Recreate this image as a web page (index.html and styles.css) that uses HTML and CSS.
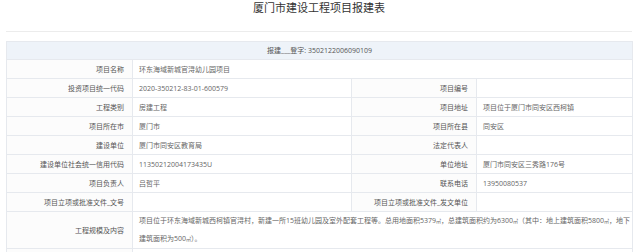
FILE: index.html
```html
<!DOCTYPE html>
<html lang="zh-CN">
<head>
<meta charset="utf-8">
<title>厦门市建设工程项目报建表</title>
<link rel="stylesheet" href="styles.css">
</head>
<body>
<div class="page">
  <h1 class="title">厦门市建设工程项目报建表</h1>
  <div class="divider"></div>
  <table class="sheet">
    <colgroup>
      <col class="c1"><col class="c2"><col class="c3"><col class="c4">
    </colgroup>
    <tr class="head"><td colspan="4">报建___登字: 3502122006090109</td></tr>
    <tr><th>项目名称</th><td colspan="3">环东海域新城官浔幼儿园项目</td></tr>
    <tr><th>投资项目统一代码</th><td>2020-350212-83-01-600579</td><th>项目编号</th><td></td></tr>
    <tr><th>工程类别</th><td>房建工程</td><th>项目地址</th><td>项目位于厦门市同安区西柯镇</td></tr>
    <tr><th>项目所在市</th><td>厦门市</td><th>项目所在县</th><td>同安区</td></tr>
    <tr><th>建设单位</th><td>厦门市同安区教育局</td><th>法定代表人</th><td></td></tr>
    <tr><th>建设单位社会统一信用代码</th><td>11350212004173435U</td><th>单位地址</th><td>厦门市同安区三秀路176号</td></tr>
    <tr><th>项目负责人</th><td>吕哲平</td><th>联系电话</th><td>13950080537</td></tr>
    <tr><th>项目立项或批准文件_文号</th><td></td><th>项目立项或批准文件_发文单位</th><td></td></tr>
    <tr class="tall"><th>工程规模及内容</th><td colspan="3">项目位于环东海域新城西柯镇官浔村，新建一所15班幼儿园及室外配套工程等。总用地面积5379<span class="unit">㎡</span>，总建筑面积约为6300<span class="unit">㎡</span>（其中：地上建筑面积5800<span class="unit">㎡</span>，地下建筑面积为500<span class="unit">㎡</span>）。</td></tr>
    <tr><th></th><td colspan="3"></td></tr>
  </table>
</div>
</body>
</html>
```
FILE: styles.css
```css
html, body {
  margin: 0;
  padding: 0;
  background: #fff;
}
body {
  font-family: "Open Sans", "Noto Sans CJK SC", sans-serif;
  color: #666;
}
.page {
  padding: 0 8px 0 6px;
}
.title {
  margin: 0;
  font-family: "Noto Sans CJK SC", sans-serif;
  font-size: 11px;
  line-height: 15px;
  font-weight: normal;
  color: #333;
  text-align: center;
}
.divider {
  margin-top: 16px;
  height: 1px;
  background: #ececec;
}
.sheet {
  margin-top: 9px;
  width: 626px;
  border-collapse: collapse;
  table-layout: fixed;
  font-size: 7px;
  line-height: 9px;
}
.c1 { width: 126px; }
.c2 { width: 219px; }
.c3 { width: 125px; }
.c4 { width: 156px; }
.sheet th, .sheet td {
  border: 1px solid #e6e9ee;
  height: 18px;
  padding: 0 6px;
  vertical-align: middle;
}
.sheet th {
  font-weight: normal;
  text-align: right;
  color: #555;
  background: #fcfcfc;
  padding-right: 8px;
}
.sheet td {
  text-align: left;
  color: #666;
}
.sheet .head td {
  background: #eef3f9;
  text-align: center;
  color: #555;
  height: 17px;
}
.sheet .tall td {
  line-height: 18px;
  height: 33px;
  padding-right: 1px;
}
.unit {
  font-size: 5px;
  line-height: 5px;
}
```
